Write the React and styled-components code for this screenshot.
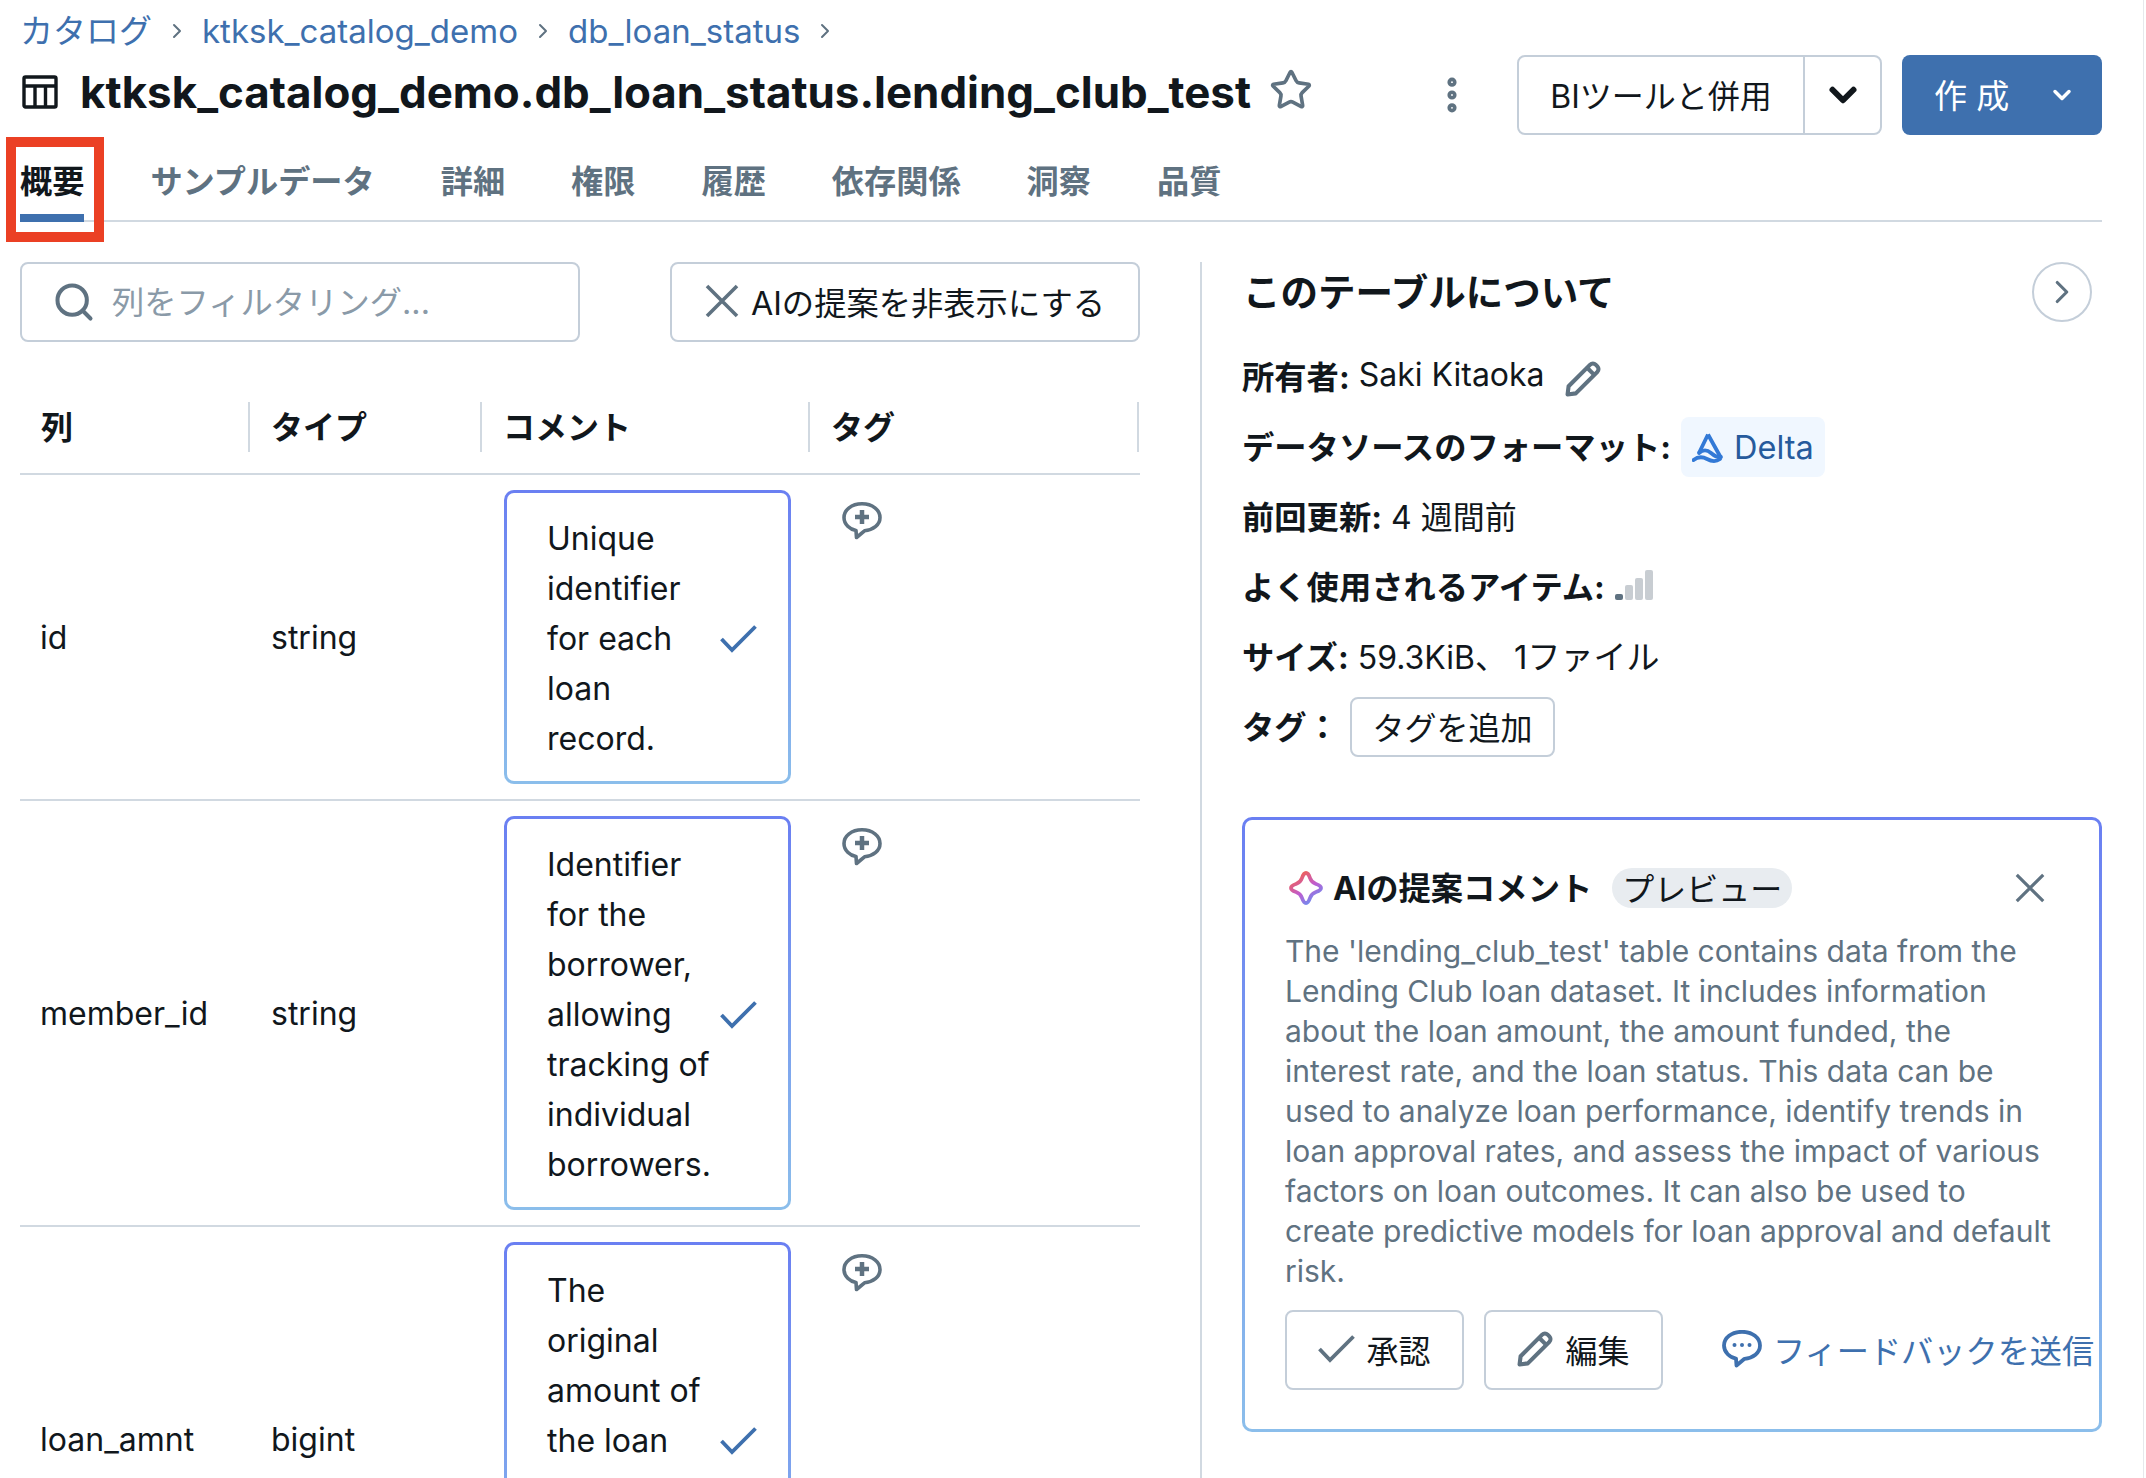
import React from 'react';
import styled, { createGlobalStyle } from 'styled-components';
import { Star, ChevronDown, ChevronRight, Search, MoreVertical } from 'lucide-react';

const TEXT = '#11171c';
const MUTED = '#5f7281';
const LINK = '#3e70ae';
const BORDER = '#c4ced9';
const LINE = '#d1d9e1';

const GlobalStyle = createGlobalStyle`
  html, body {
    margin: 0;
    background: #fff;
  }
  body {
    font-family: Inter, "Noto Sans CJK JP", sans-serif;
    font-size: 32px;
    color: ${TEXT};
  }
`;

// lines = how tall the comment box is, the last one runs past the bottom of the page
const COLUMNS = [
  { name: 'id', type: 'string', comment: 'Unique identifier for each loan record.', lines: 5 },
  {
    name: 'member_id',
    type: 'string',
    comment: 'Identifier for the borrower, allowing tracking of individual borrowers.',
    lines: 7,
  },
  { name: 'loan_amnt', type: 'bigint', comment: 'The original amount of the loan', lines: 7 },
];

const TABS = ['概要', 'サンプルデータ', '詳細', '権限', '履歴', '依存関係', '洞察', '品質'];

const AI_TEXT =
  "The 'lending_club_test' table contains data from the Lending Club loan dataset. It includes information about the loan amount, the amount funded, the interest rate, and the loan status. This data can be used to analyze loan performance, identify trends in loan approval rates, and assess the impact of various factors on loan outcomes. It can also be used to create predictive models for loan approval and default risk.";

function TableIcon() {
  return (
    <svg width="36" height="36" viewBox="0 0 36 36" fill="none" stroke={TEXT} strokeWidth="3.4">
      <rect x="2" y="3" width="32" height="30" rx="1.5" />
      <path d="M2 12h32M13 12v21M23.5 12v21" />
    </svg>
  );
}

function CloseIcon({ size = 34 }) {
  return (
    <svg width={size} height={size} viewBox="0 0 34 34" fill="none" stroke={MUTED} strokeWidth="3.6">
      <path d="M2 2l30 30M32 2L2 32" />
    </svg>
  );
}

function CheckMark({ color }) {
  return (
    <svg width="37" height="28" viewBox="0 0 37 28" fill="none" stroke={color} strokeWidth="3.8">
      <path d="M1.500 14L12 25L35.500 1.500" />
    </svg>
  );
}

function PencilIcon() {
  return (
    <svg width="37" height="37" viewBox="0 0 36 36" fill="none" stroke={MUTED} strokeWidth="4" strokeLinejoin="round">
      <path d="M2.500 33.500l1-8L24.500 4.500a3.800 3.800 0 0 1 5.300 0l1.700 1.700a3.800 3.800 0 0 1 0 5.300L10.500 32.500z" />
      <path d="M22 8l6 6" />
    </svg>
  );
}

function CommentPlusIcon() {
  return (
    <svg width="40" height="38" viewBox="0 0 40 38" fill="none" stroke={MUTED} strokeWidth="3.600">
      <path
        d="M20 1.800C9.500 1.800 2 8 2 15.500C2 22.500 8 27.500 14 28.500L14.500 35.500L22.500 28.800C31 28 38 23 38 15.500C38 8 30.500 1.800 20 1.800Z"
        strokeLinejoin="round"
      />
      <path d="M20 8v14M13 15h14" strokeWidth="4.500" />
    </svg>
  );
}

function DeltaIcon() {
  return (
    <svg width="32" height="32" viewBox="0 0 32 32" fill="none" stroke="#3279d6" strokeWidth="3.800" strokeLinejoin="round">
      <path d="M16 3.500L7 22M16 3.500L28.500 26" />
      <path d="M7 22C11 18.500 15 18.500 19 22S26 26.500 29 26" strokeLinecap="round" />
      <path d="M1.500 29C6 25.500 10.500 25.500 15 28S24 31 28 28" strokeLinecap="round" />
    </svg>
  );
}

function UsageBars() {
  return (
    <svg width="38" height="32" viewBox="0 0 38 32">
      <rect x="0" y="25" width="8" height="6" rx="2" fill="#5f7281" />
      <rect x="10" y="16" width="8" height="15" rx="2" fill="#c8cdd2" />
      <rect x="20" y="9" width="8" height="22" rx="2" fill="#c8cdd2" />
      <rect x="30" y="1" width="8" height="30" rx="2" fill="#c8cdd2" />
    </svg>
  );
}

function SparkleIcon() {
  return (
    <svg width="36" height="36" viewBox="0 0 36 36" fill="none" strokeWidth="3.800" strokeLinejoin="round">
      <defs>
        <linearGradient id="spark" x1="0.1" y1="0.1" x2="0.7" y2="1">
          <stop offset="0" stopColor="#f2604f" />
          <stop offset="0.55" stopColor="#c05ccf" />
          <stop offset="1" stopColor="#6f8cf0" />
        </linearGradient>
      </defs>
      <path
        d="M18 3C20 3 21 5 22 8C23 11 25 13 28 14C31 15 33 16 33 18C33 20 31 21 28 22C25 23 23 25 22 28C21 31 20 33 18 33C16 33 15 31 14 28C13 25 11 23 8 22C5 21 3 20 3 18C3 16 5 15 8 14C11 13 13 11 14 8C15 5 16 3 18 3Z"
        stroke="url(#spark)"
      />
    </svg>
  );
}

function FeedbackIcon() {
  return (
    <svg width="40" height="38" viewBox="0 0 40 38" fill="none" stroke={LINK} strokeWidth="3.800">
      <path
        d="M20 1.800C9.500 1.800 2 8 2 15.500C2 22.500 8 27.500 14 28.500L14.500 35.500L22.500 28.800C31 28 38 23 38 15.500C38 8 30.500 1.800 20 1.800Z"
        strokeLinejoin="round"
      />
      <g fill={LINK} stroke="none">
        <circle cx="12.500" cy="15" r="2" />
        <circle cx="20" cy="15" r="2" />
        <circle cx="27.500" cy="15" r="2" />
      </g>
    </svg>
  );
}

export default function App() {
  return (
    <Page>
      <GlobalStyle />
      <Breadcrumbs>
        <Crumb>カタログ</Crumb>
        <ChevronRight size={24} color={MUTED} />
        <Crumb>ktksk_catalog_demo</Crumb>
        <ChevronRight size={24} color={MUTED} />
        <Crumb>db_loan_status</Crumb>
        <ChevronRight size={24} color={MUTED} />
      </Breadcrumbs>

      <Header>
        <TitleGroup>
          <TableIcon />
          <Title>ktksk_catalog_demo.db_loan_status.lending_club_test</Title>
          <Star size={44} color={MUTED} strokeWidth={2} />
        </TitleGroup>
        <Kebab>
          <MoreVertical size={44} color={MUTED} strokeWidth={3} />
        </Kebab>
        <SplitButton>
          <SplitLabel>BIツールと併用</SplitLabel>
          <SplitCaret>
            <ChevronDown size={42} color={TEXT} strokeWidth={3.4} />
          </SplitCaret>
        </SplitButton>
        <CreateButton>
          <CreateLabel>作 成</CreateLabel>
          <ChevronDown size={28} color="#fff" strokeWidth={3} />
        </CreateButton>
      </Header>

      <Tabs>
        {TABS.map((tab, i) => (
          <Tab key={tab} $active={i === 0}>
            {tab}
          </Tab>
        ))}
      </Tabs>
      <Highlight />

      <Content>
        <LeftColumn>
          <Toolbar>
            <SearchBox>
              <Search size={44} color={MUTED} strokeWidth={2.2} />
              <Placeholder>列をフィルタリング...</Placeholder>
            </SearchBox>
            <HideButton>
              <CloseIcon />
              AIの提案を非表示にする
            </HideButton>
          </Toolbar>

          <HeaderRow>
            <HeaderCell>列</HeaderCell>
            <HeaderCell>タイプ</HeaderCell>
            <HeaderCell>コメント</HeaderCell>
            <HeaderCell>タグ</HeaderCell>
          </HeaderRow>

          {COLUMNS.map((col) => (
            <Row key={col.name}>
              <NameCell>{col.name}</NameCell>
              <NameCell $wide>{col.type}</NameCell>
              <CommentBox>
                <CommentText $lines={col.lines}>{col.comment}</CommentText>
                <CheckMark color={LINK} />
              </CommentBox>
              <TagCell>
                <CommentPlusIcon />
              </TagCell>
            </Row>
          ))}
        </LeftColumn>

        <SidePanel>
          <PanelHead>
            <PanelTitle>このテーブルについて</PanelTitle>
            <RoundButton>
              <ChevronRight size={38} color={MUTED} strokeWidth={2} />
            </RoundButton>
          </PanelHead>

          <InfoRow>
            <Label>所有者:</Label> Saki Kitaoka
            <PencilSlot>
              <PencilIcon />
            </PencilSlot>
          </InfoRow>
          <InfoRow>
            <Label>データソースのフォーマット:</Label>
            <DeltaChip>
              <DeltaIcon />
              Delta
            </DeltaChip>
          </InfoRow>
          <InfoRow>
            <Label>前回更新:</Label> 4 週間前
          </InfoRow>
          <InfoRow>
            <Label>よく使用されるアイテム:</Label>
            <UsageSlot>
              <UsageBars />
            </UsageSlot>
          </InfoRow>
          <InfoRow>
            <Label>サイズ:</Label> 59.3KiB、<FileCount>1ファイル</FileCount>
          </InfoRow>
          <InfoRow>
            <Label>タグ：</Label>
            <AddTagButton>タグを追加</AddTagButton>
          </InfoRow>

          <AiCard>
            <AiHead>
              <SparkleIcon />
              <AiTitle>AIの提案コメント</AiTitle>
              <PreviewPill>プレビュー</PreviewPill>
              <AiClose>
                <CloseIcon size={30} />
              </AiClose>
            </AiHead>
            <AiBody>{AI_TEXT}</AiBody>
            <AiActions>
              <ActionButton>
                <CheckMark color={MUTED} />
                承認
              </ActionButton>
              <ActionButton>
                <PencilIcon />
                編集
              </ActionButton>
              <FeedbackLink>
                <FeedbackIcon />
                フィードバックを送信
              </FeedbackLink>
            </AiActions>
          </AiCard>
        </SidePanel>
      </Content>
    </Page>
  );
}

const Page = styled.div`
  position: relative;
  box-sizing: border-box;
  width: 2144px;
  height: 1478px;
  padding: 0 41px 0 20px;
  overflow: hidden;
  border-right: 1px solid #e6e9ec;
`;

const Breadcrumbs = styled.div`
  display: flex;
  align-items: center;
  gap: 13px;
  height: 49px;
  padding-top: 6px;
`;

const Crumb = styled.span`
  font-size: 33px;
  color: ${LINK};
  line-height: 40px;
`;

const Header = styled.div`
  display: flex;
  align-items: center;
  height: 80px;
`;

const TitleGroup = styled.div`
  display: flex;
  align-items: center;
  flex: 1;
  margin-bottom: 7px;
  padding-left: 2px;

  svg:last-child {
    margin-left: 18px;
    margin-top: -4px;
  }
`;

const Title = styled.h1`
  margin: 0 0 0 22px;
  font-size: 43.9px;
  font-weight: 700;
  line-height: 56px;
  white-space: nowrap;
`;

const Kebab = styled.div`
  display: flex;
  margin-right: 43px;
`;

const SplitButton = styled.div`
  display: flex;
  box-sizing: border-box;
  width: 365px;
  height: 80px;
  border: 2px solid ${BORDER};
  border-radius: 8px;
`;

const SplitLabel = styled.div`
  display: flex;
  align-items: center;
  justify-content: center;
  width: 284px;
  padding-bottom: 3px;
  border-right: 2px solid ${BORDER};
`;

const SplitCaret = styled.div`
  display: flex;
  flex: 1;
  align-items: center;
  justify-content: center;
`;

const CreateButton = styled.div`
  display: flex;
  align-items: center;
  justify-content: space-between;
  box-sizing: border-box;
  width: 200px;
  height: 80px;
  margin-left: 20px;
  padding: 0 26px 0 32px;
  color: #fff;
  background: ${LINK};
  border-radius: 8px;
`;

const CreateLabel = styled.span`
  padding-bottom: 3px;
  font-size: 33px;
`;

const Tabs = styled.div`
  display: flex;
  gap: 66px;
  box-sizing: border-box;
  height: 87px;
  border-bottom: 2px solid ${LINE};
`;

const Tab = styled.div`
  display: flex;
  align-items: center;
  height: 87px;
  box-sizing: border-box;
  padding-top: 8px;
  font-size: 32.2px;
  font-weight: 700;
  color: ${(p) => (p.$active ? TEXT : MUTED)};
  border-bottom: ${(p) => (p.$active ? `8px solid ${LINK}` : 'none')};
  padding-bottom: ${(p) => (p.$active ? '0' : '8px')};
`;

const Highlight = styled.div`
  position: absolute;
  top: 137px;
  left: 6px;
  box-sizing: border-box;
  width: 98px;
  height: 105px;
  border: 10px solid #eb4024;
`;

const Content = styled.div`
  display: flex;
  margin-top: 40px;
`;

const LeftColumn = styled.div`
  flex: none;
  width: 1120px;
`;

const Toolbar = styled.div`
  display: flex;
  justify-content: space-between;
`;

const SearchBox = styled.div`
  display: flex;
  align-items: center;
  gap: 16px;
  box-sizing: border-box;
  width: 560px;
  height: 80px;
  padding: 0 30px;
  border: 2px solid ${BORDER};
  border-radius: 8px;
`;

const Placeholder = styled.span`
  padding-bottom: 4px;
  font-size: 32.3px;
  color: #8a9aa8;
`;

const HideButton = styled.div`
  display: flex;
  align-items: center;
  justify-content: center;
  gap: 12px;
  box-sizing: border-box;
  width: 470px;
  height: 80px;
  padding-bottom: 2px;
  font-size: 32.3px;
  border: 2px solid ${BORDER};
  border-radius: 8px;
  white-space: nowrap;
`;

const TABLE_COLS = '230px 232px 328px 329px';

const HeaderRow = styled.div`
  display: grid;
  grid-template-columns: ${TABLE_COLS};
  align-items: center;
  height: 133px;
  box-sizing: border-box;
  border-bottom: 2px solid ${LINE};
`;

const HeaderCell = styled.div`
  display: flex;
  align-items: center;
  box-sizing: border-box;
  height: 50px;
  margin-top: 38px;
  padding: 0 0 4px 21px;
  font-weight: 700;
  border-right: 2px solid ${LINE};
`;

const Row = styled.div`
  display: grid;
  grid-template-columns: ${TABLE_COLS};
  box-sizing: border-box;
  padding: 15px 0;
  border-bottom: 2px solid ${LINE};
`;

const NameCell = styled.div`
  display: flex;
  align-items: center;
  padding-left: ${(p) => (p.$wide ? '21px' : '20px')};
`;

const CommentBox = styled.div`
  display: flex;
  align-items: center;
  justify-content: space-between;
  box-sizing: border-box;
  width: 287px;
  margin-left: 22px;
  padding: 21px 31px 17px 40px;
  line-height: 50px;
  border: 3px solid transparent;
  border-radius: 10px;
  background: linear-gradient(#fff, #fff) padding-box,
    linear-gradient(180deg, #6a7ff2, #8bbeeb) border-box;
`;

const CommentText = styled.div`
  width: 172px;
  min-height: ${(p) => p.$lines * 50}px;
`;

const TagCell = styled.div`
  padding: 12px 0 0 32px;
`;

const SidePanel = styled.div`
  flex: 1;
  min-height: 1300px;
  margin-left: 60px;
  padding-left: 40px;
  border-left: 2px solid ${LINE};
`;

const PanelHead = styled.div`
  display: flex;
  align-items: center;
  justify-content: space-between;
  height: 60px;
  margin-bottom: 25px;
  padding-right: 10px;
`;

const PanelTitle = styled.h2`
  margin: 0 0 6px 1px;
  font-size: 37.5px;
  font-weight: 700;
`;

const RoundButton = styled.div`
  display: flex;
  align-items: center;
  justify-content: center;
  box-sizing: border-box;
  width: 60px;
  height: 60px;
  border: 2px solid ${BORDER};
  border-radius: 50%;
`;

const InfoRow = styled.div`
  display: flex;
  align-items: center;
  box-sizing: border-box;
  height: 60px;
  margin-bottom: 10px;
  padding-bottom: 5px;
  white-space: pre;
`;

const Label = styled.span`
  font-size: 32.3px;
  font-weight: 700;
`;

const FileCount = styled.span`
  margin-left: 7px;
  font-size: 33px;
`;

const PencilSlot = styled.span`
  display: flex;
  margin: 8px 0 0 20px;
`;

const UsageSlot = styled.span`
  display: flex;
  margin-left: 10px;
`;

const DeltaChip = styled.span`
  display: flex;
  align-items: center;
  gap: 10px;
  height: 60px;
  margin: 0 0 -5px 10px;
  padding: 0 11px;
  font-size: 32.5px;
  color: #265a9c;
  background: #f0f7ff;
  border-radius: 8px;
`;

const AddTagButton = styled.div`
  display: flex;
  align-items: center;
  justify-content: center;
  box-sizing: border-box;
  width: 205px;
  height: 60px;
  margin: 0 0 -5px 11px;
  padding-bottom: 3px;
  border: 2px solid ${BORDER};
  border-radius: 8px;
`;

const AiCard = styled.div`
  box-sizing: border-box;
  width: 860px;
  height: 615px;
  margin-top: 60px;
  padding: 48px 0 0 40px;
  border: 3px solid transparent;
  border-radius: 10px;
  background: linear-gradient(#fff, #fff) padding-box,
    linear-gradient(180deg, #6a7ff2, #8bbeeb) border-box;
`;

const AiHead = styled.div`
  display: flex;
  align-items: center;
  height: 40px;
  padding-left: 3px;
`;

const AiTitle = styled.span`
  margin: 0 0 4px 9px;
  font-size: 32.3px;
  font-weight: 700;
`;

const PreviewPill = styled.span`
  display: flex;
  align-items: center;
  box-sizing: border-box;
  height: 40px;
  margin-left: 20px;
  padding: 0 10px 3px;
  background: #e8ecf0;
  border-radius: 20px;
`;

const AiClose = styled.span`
  display: flex;
  margin-left: auto;
  margin-right: 54px;
`;

const AiBody = styled.p`
  width: 775px;
  margin: 23px 0 19px;
  font-size: 30px;
  line-height: 40px;
  color: ${MUTED};
`;

const AiActions = styled.div`
  display: flex;
  align-items: center;
  gap: 20px;
`;

const ActionButton = styled.div`
  display: flex;
  align-items: center;
  justify-content: center;
  gap: 11px;
  box-sizing: border-box;
  width: 179px;
  height: 80px;
  padding-bottom: 3px;
  border: 2px solid ${BORDER};
  border-radius: 8px;
`;

const FeedbackLink = styled.div`
  display: flex;
  align-items: center;
  gap: 11px;
  margin-left: 39px;
  padding-bottom: 3px;
  font-size: 32.2px;
  color: ${LINK};
  white-space: nowrap;
`;
